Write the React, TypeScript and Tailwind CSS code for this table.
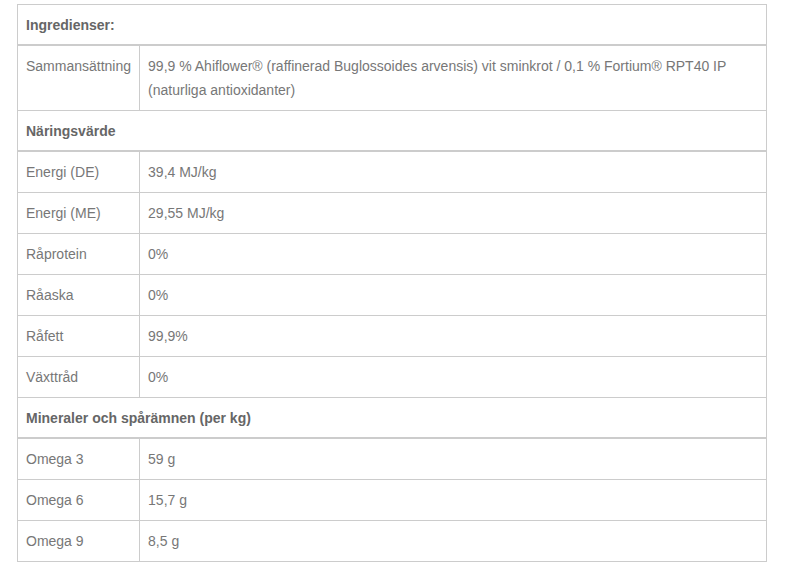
import React from "react";

type Row = { label: string; value?: string; header?: boolean };

const rows: Row[] = [
  { label: "Ingredienser:", header: true },
  {
    label: "Sammansättning",
    value:
      "99,9 % Ahiflower® (raffinerad Buglossoides arvensis) vit sminkrot / 0,1 % Fortium® RPT40 IP (naturliga antioxidanter)",
  },
  { label: "Näringsvärde", header: true },
  { label: "Energi (DE)", value: "39,4 MJ/kg" },
  { label: "Energi (ME)", value: "29,55 MJ/kg" },
  { label: "Råprotein", value: "0%" },
  { label: "Råaska", value: "0%" },
  { label: "Råfett", value: "99,9%" },
  { label: "Växttråd", value: "0%" },
  { label: "Mineraler och spårämnen (per kg)", header: true },
  { label: "Omega 3", value: "59 g" },
  { label: "Omega 6", value: "15,7 g" },
  { label: "Omega 9", value: "8,5 g" },
];

export default function App() {
  return (
    <div className="min-h-screen w-full bg-white pt-[4px] pl-[17px]">
      <table
        className="w-[750px] border-collapse text-[14px] leading-[24px] text-[#777]"
        style={{ fontFamily: '"Liberation Sans", Arial, sans-serif' }}
      >
        <colgroup>
          <col className="w-[122px]" />
          <col />
        </colgroup>
        <tbody>
          {rows.map((row) =>
            row.header ? (
              <tr key={row.label}>
                <th
                  colSpan={2}
                  className="border border-[#ccc] border-b-2 px-[8px] pt-[8px] pb-[7px] text-left font-bold text-[#666]"
                >
                  {row.label}
                </th>
              </tr>
            ) : (
              <tr key={row.label}>
                <td className="border border-[#ccc] px-[8px] py-[8px] align-top">
                  {row.label}
                </td>
                <td className="border border-[#ccc] px-[8px] py-[8px] align-top">
                  {row.value}
                </td>
              </tr>
            )
          )}
        </tbody>
      </table>
    </div>
  );
}
